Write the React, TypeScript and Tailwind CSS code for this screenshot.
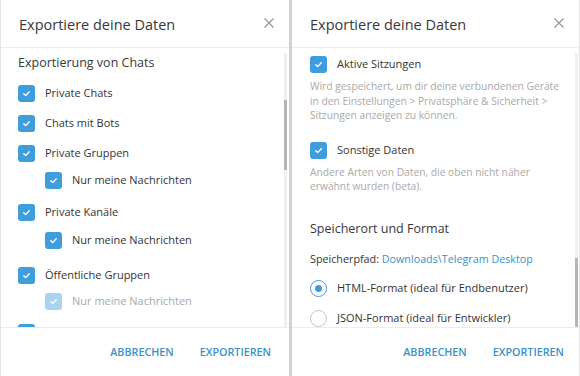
import React from 'react';

const font = { fontFamily: '"Open Sans", "Noto Sans", sans-serif' };

function Check({ faded = false }: { faded?: boolean }) {
  return (
    <span
      className={`flex h-[17px] w-[17px] shrink-0 items-center justify-center rounded-[3px] ${
        faded ? 'bg-[#a9d3ef]' : 'bg-[#3e9ddc]'
      }`}
    >
      <svg width="11" height="11" viewBox="0 0 12 12" fill="none">
        <path d="M3 6.3 L5.1 8.3 L9 4" stroke="white" strokeWidth="1.5" strokeLinecap="round" strokeLinejoin="round" />
      </svg>
    </span>
  );
}

function Radio({ on = false }: { on?: boolean }) {
  return (
    <span
      className={`flex h-[17px] w-[17px] shrink-0 items-center justify-center rounded-full border-[1.5px] ${
        on ? 'border-[#3e9ddc]' : 'border-[#c4c4c4]'
      }`}
    >
      {on && <span className="h-[7px] w-[7px] rounded-full bg-[#3e9ddc]" />}
    </span>
  );
}

function Row({ label, sub = false, faded = false, className = '' }: { label?: string; sub?: boolean; faded?: boolean; className?: string }) {
  return (
    <div className={`flex h-[26px] items-center gap-[10px] ${sub ? 'pl-[27px]' : ''} ${className}`}>
      <Check faded={faded} />
      {label && <span className={`text-[11px] ${faded ? 'text-[#a8a8a8]' : 'text-[#333]'}`}>{label}</span>}
    </div>
  );
}

function Header() {
  return (
    <div className="flex h-[48px] shrink-0 items-center justify-between border-b border-[#ececec] pl-[18px] pr-[14px] pt-[2px]">
      <span className="text-[14.5px] text-[#383838]">Exportiere deine Daten</span>
      <svg width="12" height="12" viewBox="0 0 12 12" className="mb-[3px]">
        <path d="M1.5 1.5 L10.5 10.5 M10.5 1.5 L1.5 10.5" stroke="#9a9a9a" strokeWidth="1.4" />
      </svg>
    </div>
  );
}

function Footer({ pr }: { pr: string }) {
  return (
    <div className={`flex flex-1 items-center justify-end gap-[26px] border-t border-[#ececec] ${pr}`}>
      <span className="text-[10.75px] font-semibold text-[#3a92c8]">ABBRECHEN</span>
      <span className="text-[10.75px] font-semibold text-[#3a92c8]">EXPORTIEREN</span>
    </div>
  );
}

function Scrollbar({ top, height }: { top: string; height: string }) {
  return (
    <div className="mt-[5px] flex w-[3px] shrink-0 flex-col bg-[#efefef]">
      <div className={`${top} ${height} w-[3px] bg-[#b5b5b5]`} />
    </div>
  );
}

export default function App() {
  return (
    <div className="flex h-[376px] w-[580px] overflow-hidden bg-white" style={font}>
      <div className="flex w-[289px] flex-col border-l border-[#e4e4e4] bg-white">
        <Header />
        <div className="flex h-[279px] shrink-0 overflow-hidden pr-[2px]">
          <div className="flex-1 pl-[17px] pt-[4px]">
            <div className="flex h-[22px] items-center text-[12.5px] text-[#383838]">Exportierung von Chats</div>
            <Row label="Private Chats" className="mt-[6px]" />
            <Row label="Chats mit Bots" className="mt-[4px]" />
            <Row label="Private Gruppen" className="mt-[4px]" />
            <Row label="Nur meine Nachrichten" sub className="mt-[1px]" />
            <Row label="Private Kanäle" className="mt-[6px]" />
            <Row label="Nur meine Nachrichten" sub className="mt-[2px]" />
            <Row label="Öffentliche Gruppen" className="mt-[9px]" />
            <Row label="Nur meine Nachrichten" sub faded />
            <Row className="mt-[5px]" />
          </div>
          <Scrollbar top="mt-[47px]" height="h-[70px]" />
        </div>
        <Footer pr="pr-[18px]" />
      </div>
      <div className="w-[3px] shrink-0 bg-[#d2d2d2]" />
      <div className="flex flex-1 flex-col border-r border-[#e4e4e4] bg-white">
        <Header />
        <div className="flex h-[279px] shrink-0 overflow-hidden pr-[1px]">
          <div className="flex-1 pl-[18px] pr-[10px] pt-[3px]">
            <div className="flex h-[26px] items-center gap-[10px]">
              <Check />
              <span className="text-[11px] text-[#333]">Aktive Sitzungen</span>
            </div>
            <p className="mt-[2px] text-[10.25px] leading-[14.5px] text-[#a9a9a9]">
              Wird gespeichert, um dir deine verbundenen Geräte in den Einstellungen &gt; Privatsphäre &amp; Sicherheit &gt; Sitzungen anzeigen zu können.
            </p>
            <div className="mt-[15px] flex h-[26px] items-center gap-[10px]">
              <Check />
              <span className="text-[11px] text-[#333]">Sonstige Daten</span>
            </div>
            <p className="mt-[1px] text-[10.25px] leading-[14.5px] text-[#a9a9a9]">
              Andere Arten von Daten, die oben nicht näher erwähnt wurden (beta).
            </p>
            <div className="mt-[25px] flex h-[22px] items-center text-[12.5px] text-[#383838]">Speicherort und Format</div>
            <div className="mt-[9px] flex h-[20px] items-center text-[10.75px] text-[#333]">
              Speicherpfad:&nbsp;<span className="text-[#3a92c8]">Downloads\Telegram Desktop</span>
            </div>
            <div className="mt-[6px] flex h-[26px] items-center gap-[10px]">
              <Radio on />
              <span className="text-[11px] text-[#333]">HTML-Format (ideal für Endbenutzer)</span>
            </div>
            <div className="mt-[4px] flex h-[26px] items-center gap-[10px]">
              <Radio />
              <span className="text-[11px] text-[#333]">JSON-Format (ideal für Entwickler)</span>
            </div>
          </div>
          <Scrollbar top="mt-[205px]" height="h-[69px]" />
        </div>
        <Footer pr="pr-[15px]" />
      </div>
    </div>
  );
}
